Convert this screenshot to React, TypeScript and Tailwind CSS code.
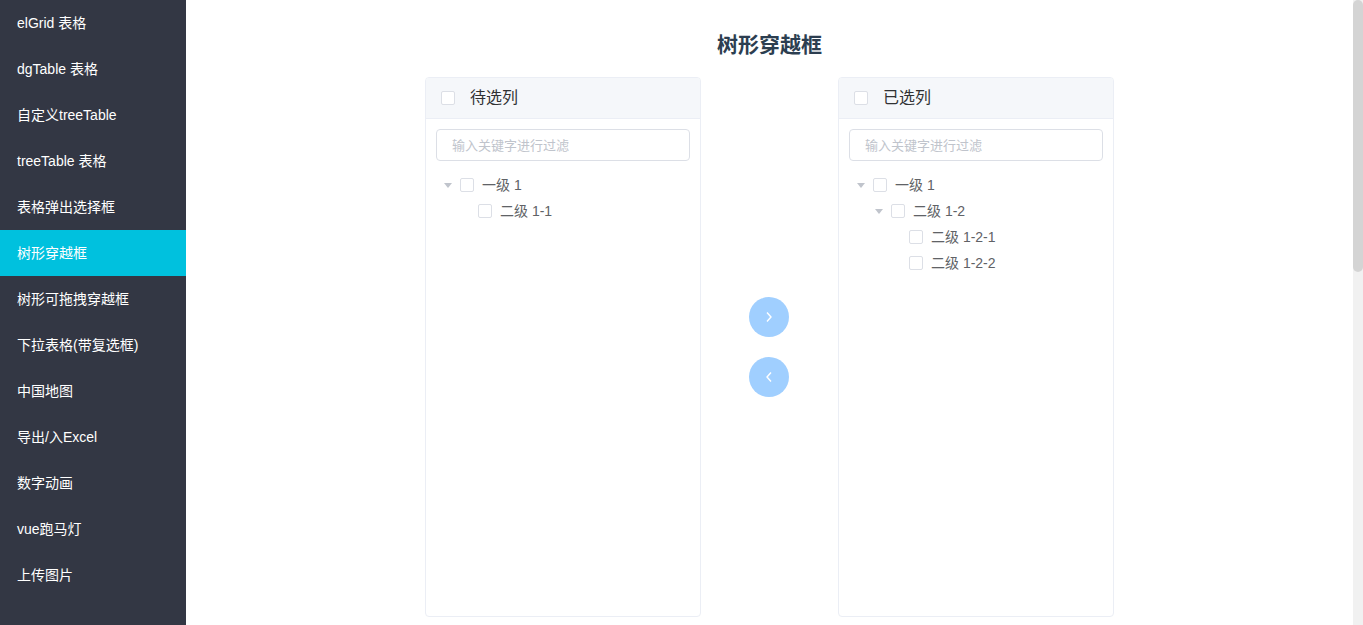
import React from "react";

const menu = [
  "elGrid 表格",
  "dgTable 表格",
  "自定义treeTable",
  "treeTable 表格",
  "表格弹出选择框",
  "树形穿越框",
  "树形可拖拽穿越框",
  "下拉表格(带复选框)",
  "中国地图",
  "导出/入Excel",
  "数字动画",
  "vue跑马灯",
  "上传图片",
];

type Node = { label: string; level: number; open?: boolean };

const leftTree: Node[] = [
  { label: "一级 1", level: 0, open: true },
  { label: "二级 1-1", level: 1 },
];

const rightTree: Node[] = [
  { label: "一级 1", level: 0, open: true },
  { label: "二级 1-2", level: 1, open: true },
  { label: "二级 1-2-1", level: 2 },
  { label: "二级 1-2-2", level: 2 },
];

function Checkbox() {
  return <span className="block w-[14px] h-[14px] shrink-0 rounded-[2px] border border-[#dcdfe6] bg-white" />;
}

function Panel({ title, nodes }: { title: string; nodes: Node[] }) {
  return (
    <div className="w-[276px] h-[540px] flex flex-col rounded-[4px] border border-[#ebeef5] bg-white overflow-hidden">
      {/* header */}
      <div className="h-[41px] flex items-center pl-[15px] bg-[#f5f7fa] border-b border-[#ebeef5]">
        <Checkbox />
        <span className="ml-[15px] text-[16px] text-[#303133]">{title}</span>
      </div>
      <div className="px-[10px] pt-[10px]">
        <input
          placeholder="输入关键字进行过滤"
          className="w-full h-[32px] rounded-[4px] border border-[#dcdfe6] pl-[15px] text-[13px] outline-none placeholder:text-[#c0c4cc]"
        />
        <ul className="mt-[11px]">
          {nodes.map((n, i) => (
            <li key={i} className="h-[26px] flex items-center" style={{ paddingLeft: n.level * 18 }}>
              <span className="w-[24px] h-[26px] flex items-center justify-center">
                {n.open && (
                  <svg width="8" height="5" viewBox="0 0 8 5">
                    <path d="M0 0 L8 0 L4 5 Z" fill="#c0c4cc" />
                  </svg>
                )}
              </span>
              <Checkbox />
              <span className="ml-[8px] text-[14px] text-[#606266]">{n.label}</span>
            </li>
          ))}
        </ul>
      </div>
    </div>
  );
}

function ArrowButton({ dir }: { dir: "right" | "left" }) {
  return (
    <button className="w-[40px] h-[40px] rounded-full bg-[#a0cfff] flex items-center justify-center cursor-not-allowed">
      <svg width="8" height="12" viewBox="0 0 8 12" fill="none" stroke="white" strokeWidth="1.4">
        {dir === "right" ? <path d="M2 1.5 L6 6 L2 10.5" /> : <path d="M6 1.5 L2 6 L6 10.5" />}
      </svg>
    </button>
  );
}

export default function App() {
  return (
    <div
      className="flex h-[625px] w-full overflow-hidden"
      style={{ fontFamily: '"Liberation Sans", Arial, "Noto Sans CJK SC", sans-serif' }}
    >
      {/* sidebar */}
      <aside className="w-[186px] shrink-0 bg-[#333744]">
        {menu.map((m) => (
          <div
            key={m}
            className={
              "h-[46px] flex items-center pl-[17px] pt-[1px] text-[14px] text-white " +
              (m === "树形穿越框" ? "bg-[#00c1de]" : "")
            }
          >
            {m}
          </div>
        ))}
      </aside>

      {/* main */}
      <main className="flex-1 h-full overflow-hidden bg-white">
        <h1 className="pt-[31px] text-center text-[21px] leading-[28px] font-bold text-[#2c3e50]">树形穿越框</h1>
        <div className="mt-[18px] flex justify-center">
          <Panel title="待选列" nodes={leftTree} />
          <div className="w-[137px] flex flex-col items-center justify-center gap-[20px] pr-[1px]">
            <ArrowButton dir="right" />
            <ArrowButton dir="left" />
          </div>
          <Panel title="已选列" nodes={rightTree} />
        </div>
      </main>

      {/* page scrollbar */}
      <div className="w-[10px] shrink-0 h-full bg-[#f1f1f1]">
        <div className="h-[272px] w-full rounded-[5px] bg-[#d4d4d4]" />
      </div>
    </div>
  );
}
